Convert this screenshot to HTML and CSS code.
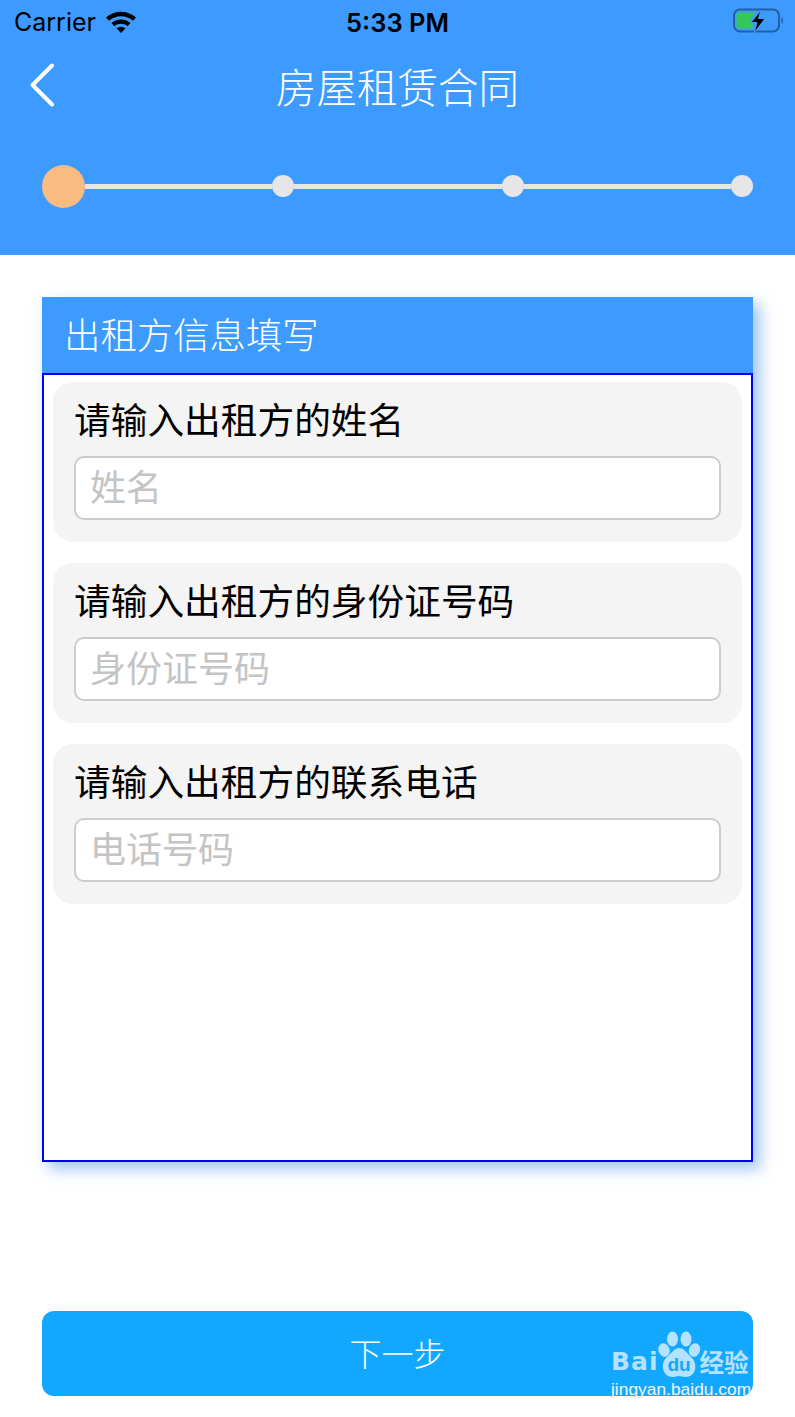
FILE: index.html
```html
<!DOCTYPE html>
<html lang="zh-CN">
<head>
    <meta charset="UTF-8">
    <meta name="viewport" content="width=device-width, initial-scale=1.0">
    <link rel="stylesheet" href="styles.css">
    <title>房屋租赁合同</title>
</head>
<body>
    <div class="top">
        <div class="statusbar">
            <div class="status-left">
                <span class="carrier">Carrier</span>
                <svg class="wifi" width="32" height="24" viewBox="0 0 32 24">
                    <path d="M1 8.500C9.500 0.800 22.500 0.800 31 8.500L28 11.800C21 5.800 11 5.800 4 11.800Z" fill="#000"/>
                    <path d="M6.500 14C12 9.400 20 9.400 25.500 14L22.600 17.200C18.600 14 13.400 14 9.400 17.200Z" fill="#000"/>
                    <path d="M11.500 19.200C14.400 17.200 17.600 17.200 20.500 19.200L16 24Z" fill="#000"/>
                </svg>
            </div>
            <span class="clock">5:33 PM</span>
            <svg class="battery" width="52" height="26" viewBox="0 0 52 26">
                <rect x="2" y="1.500" width="45" height="22" rx="6" fill="none" stroke="#23609f" stroke-width="2"/>
                <path d="M49.500 9v7c1-.5 1.500-2 1.500-3.500s-.5-3-1.500-3.500Z" fill="#23609f"/>
                <path d="M6.500 4.500h17l-6 9h5l-3 7h-13a2 2 0 0 1-2-2v-12a2 2 0 0 1 2-2Z" fill="#34c759"/>
                <path d="M29 2 19 14.500h6L22 25 33 10.500h-6.500Z" fill="#000" stroke="#3d9bff" stroke-width="1"/>
            </svg>
        </div>
        <div class="navbar">
            <svg class="back" width="26" height="44" viewBox="0 0 26 44">
                <path d="M23 2.500 3.500 22 23 41.500" fill="none" stroke="#fff" stroke-width="4" stroke-linecap="round" stroke-linejoin="round"/>
            </svg>
            <h1 class="title">房屋租赁合同</h1>
        </div>
        <div class="steps">
            <span class="dot dot-active"></span>
            <span class="line line-first"></span>
            <span class="dot"></span>
            <span class="line"></span>
            <span class="dot"></span>
            <span class="line"></span>
            <span class="dot"></span>
        </div>
    </div>

    <div class="card">
        <div class="card-head">出租方信息填写</div>
        <div class="card-body">
            <div class="field">
                <label class="field-label">请输入出租方的姓名</label>
                <div class="input">姓名</div>
            </div>
            <div class="field">
                <label class="field-label">请输入出租方的身份证号码</label>
                <div class="input">身份证号码</div>
            </div>
            <div class="field">
                <label class="field-label">请输入出租方的联系电话</label>
                <div class="input">电话号码</div>
            </div>
        </div>
    </div>

    <div class="next">下一步</div>

    <div class="watermark">
        <div class="wm-logo">
            <span class="wm-bai">Bai</span>
            <svg class="wm-paw" width="44" height="48" viewBox="0 0 44 48">
                <ellipse cx="15.500" cy="8" rx="5.500" ry="7.500" fill="#b5e2ff"/>
                <ellipse cx="29" cy="8" rx="5.500" ry="7.500" fill="#b5e2ff"/>
                <ellipse cx="7" cy="19" rx="5.500" ry="7" fill="#b5e2ff" transform="rotate(-20 7 19)"/>
                <ellipse cx="37.500" cy="19" rx="5.500" ry="7" fill="#b5e2ff" transform="rotate(20 37.500 19)"/>
                <path d="M22 17c5 0 8 5 12 9 7 6 6 20-6 20-3 0-4-1-6-1s-3 1-6 1C5 46 3 32 10 26c4-3 7-9 12-9Z" fill="#b5e2ff"/>
                <text x="22" y="40" class="wm-du">du</text>
            </svg>
            <span class="wm-cn">经验</span>
        </div>
        <div class="wm-url">jingyan.baidu.com</div>
    </div>
</body>
</html>
```

FILE: styles.css
```css
* {
    box-sizing: border-box;
}
html, body {
    margin: 0;
    padding: 0;
}
body {
    position: relative;
    width: 795px;
    height: 1417px;
    overflow: hidden;
    background-color: #ffffff;
    font-family: "Noto Sans CJK SC", "Noto Sans", sans-serif;
}

/* blue header */
.top {
    height: 255px;
    background-color: #3d9bff;
}
.statusbar {
    display: flex;
    align-items: center;
    justify-content: space-between;
    height: 44px;
    padding: 0 14px;
    color: #000000;
    font-family: Inter, "Liberation Sans", sans-serif;
    font-size: 25px;
}
.status-left {
    display: flex;
    align-items: center;
    gap: 9px;
    width: 200px;
}
.wifi {
    margin-top: -2px;
}
.clock {
    font-size: 25.500px;
    font-weight: 600;
}
.battery {
    margin-right: -3px;
    margin-left: 151px;
    margin-top: -2px;
}
.navbar {
    display: flex;
    align-items: center;
    justify-content: center;
    position: relative;
    height: 84px;
}
.back {
    position: absolute;
    left: 29px;
    top: 19px;
}
.title {
    margin: 0;
    color: #ffffff;
    font-size: 40.500px;
    font-weight: 300;
    line-height: 84px;
}
.steps {
    display: flex;
    align-items: center;
    height: 44px;
    margin-top: 36px;
    padding: 0 42px;
}
.dot {
    flex: none;
    width: 22px;
    height: 22px;
    border-radius: 50%;
    background-color: #e6e6e6;
}
.dot-active {
    width: 43px;
    height: 43px;
    background-color: #f8bb82;
}
.line {
    flex: 1;
    height: 5px;
    background-color: #e6e6e6;
}
.line-first {
    flex: none;
    width: 187px;
}

/* form card */
.card {
    width: 711px;
    height: 865px;
    margin: 42px 0 0 42px;
    box-shadow: 7px 7px 14px rgba(61, 140, 235, 0.5);
}
.card-head {
    height: 76px;
    padding-left: 22px;
    background-color: #3d9bff;
    color: #ffffff;
    font-size: 36.400px;
    font-weight: 300;
    line-height: 73px;
}
.card-body {
    display: flex;
    flex-direction: column;
    gap: 21px;
    height: 789px;
    padding: 7px 9px 0;
    border: 2px solid #0000ff;
    background-color: #ffffff;
}
.field {
    height: 160px;
    padding: 10px 21px 0;
    border-radius: 20px;
    background-color: #f4f4f4;
}
.field-label {
    display: block;
    height: 64px;
    color: #000000;
    font-size: 36.700px;
    line-height: 52px;
}
.input {
    height: 64px;
    padding-left: 14px;
    border: 2px solid #cccccc;
    border-radius: 10px;
    background-color: #ffffff;
    color: #c4c4c4;
    font-size: 36px;
    line-height: 54px;
}

.next {
    width: 711px;
    height: 85px;
    margin: 149px 0 0 42px;
    border-radius: 12px;
    background-color: #12a8ff;
    color: #ffffff;
    font-size: 32px;
    font-weight: 300;
    line-height: 83px;
    text-align: center;
}

/* baidu mark over the button corner */
.watermark {
    position: absolute;
    left: 611px;
    top: 1332px;
    width: 145px;
}
.wm-logo {
    display: flex;
    align-items: flex-end;
    height: 47px;
    color: #b5e2ff;
}
.wm-bai {
    margin-bottom: 6px;
    font-family: "DejaVu Sans", sans-serif;
    font-size: 25px;
    font-weight: 700;
    letter-spacing: 1px;
    line-height: 22px;
}
.wm-paw {
    flex: none;
    margin-left: -2px;
}
.wm-du {
    fill: #12a8ff;
    font-family: "Liberation Sans", sans-serif;
    font-size: 19px;
    font-weight: 700;
    text-anchor: middle;
}
.wm-cn {
    margin-bottom: 4px;
    margin-left: -1px;
    font-size: 24.500px;
    font-weight: 700;
    line-height: 26px;
    white-space: nowrap;
}
.wm-url {
    color: #e6f5ff;
    font-family: "Liberation Sans", sans-serif;
    font-size: 17.400px;
    line-height: 20px;
    text-shadow: 0 0 1px rgba(130, 170, 200, 0.6);
    white-space: nowrap;
}
```
